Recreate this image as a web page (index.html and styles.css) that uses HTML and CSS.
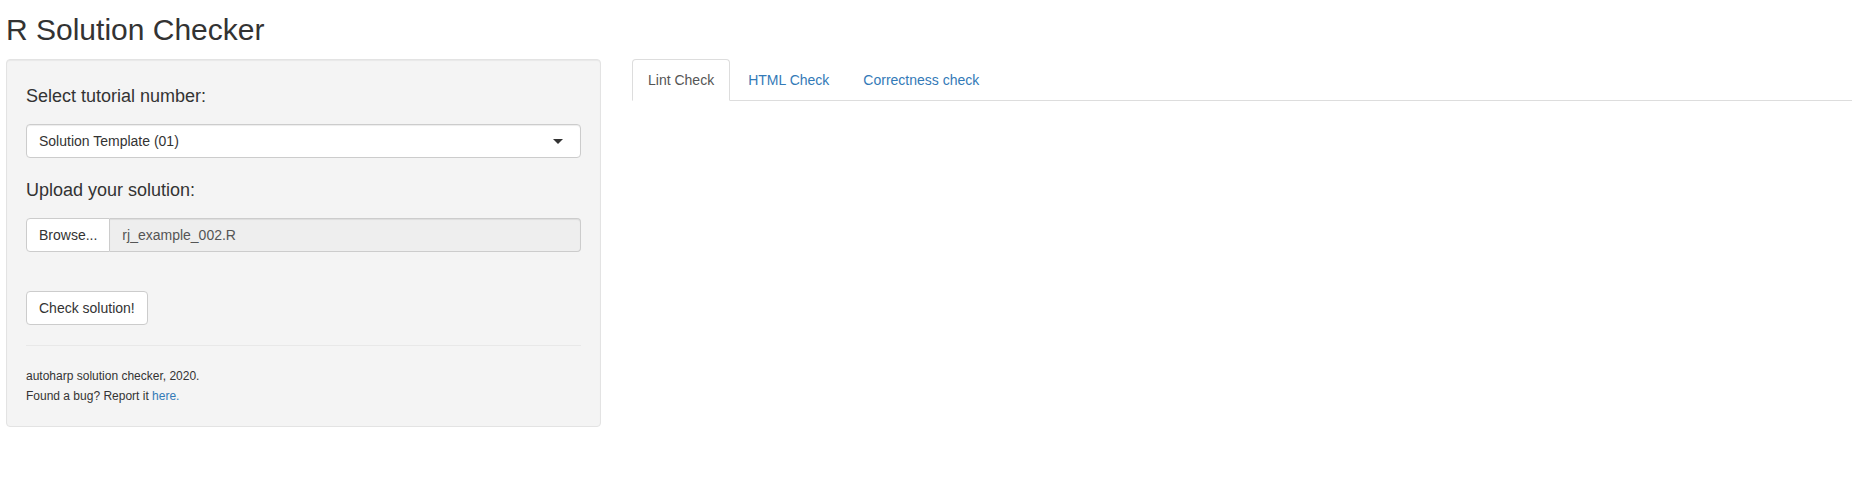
FILE: index.html
```html
<!DOCTYPE html>
<html lang="en">
<head>
<meta charset="utf-8">
<title>R Solution Checker</title>
<link rel="stylesheet" href="styles.css">
</head>
<body>
<div class="page">
  <h2 class="title">R Solution Checker</h2>
  <div class="layout">
    <aside class="sidebar">
      <div class="form-group">
        <label class="field-label">Select tutorial number:</label>
        <div class="select">
          <span class="select-text">Solution Template (01)</span>
          <span class="caret"></span>
        </div>
      </div>
      <div class="form-group file-group">
        <label class="field-label">Upload your solution:</label>
        <div class="file-input">
          <span class="browse">Browse...</span>
          <span class="file-name">rj_example_002.R</span>
        </div>
      </div>
      <button class="btn" type="button">Check solution!</button>
      <hr class="divider">
      <div class="credits">autoharp solution checker, 2020.<br>Found a bug? Report it <a href="#">here.</a></div>
    </aside>
    <main class="main">
      <ul class="tabs">
        <li class="tab active"><a href="#">Lint Check</a></li>
        <li class="tab"><a href="#">HTML Check</a></li>
        <li class="tab"><a href="#">Correctness check</a></li>
      </ul>
    </main>
  </div>
</div>
</body>
</html>
```

FILE: styles.css
```css
* {
  box-sizing: border-box;
}

html, body {
  margin: 0;
  background: #fff;
}

body {
  font-family: "Liberation Sans", Arial, Helvetica, sans-serif;
  font-size: 14px;
  line-height: 20px;
  color: #333;
}

.page {
  padding: 0 4px 0 6px;
}

.title {
  margin: 13px 0 13px 0;
  font-size: 30px;
  line-height: 33px;
  font-weight: normal;
  color: #333;
}

.layout {
  display: flex;
  align-items: flex-start;
  gap: 31px;
}

.sidebar {
  display: flex;
  flex-direction: column;
  align-items: stretch;
  width: 595px;
  flex: 0 0 595px;
  background: #f4f4f4;
  border: 1px solid #e3e3e3;
  border-radius: 4px;
  box-shadow: inset 0 1px 1px rgba(0, 0, 0, 0.05);
  padding: 19px 19px 20px 19px;
}

.form-group {
  padding-top: 5px;
  margin-bottom: 15px;
}

.file-group {
  margin-bottom: 39px;
}

.field-label {
  display: block;
  margin: 0 0 16px 0;
  font-size: 18px;
  line-height: 24px;
  font-weight: normal;
  color: #333;
}

.select {
  display: flex;
  align-items: center;
  justify-content: space-between;
  height: 34px;
  padding: 6px 17px 6px 12px;
  background: #fff;
  border: 1px solid #ccc;
  border-radius: 4px;
  box-shadow: inset 0 1px 1px rgba(0, 0, 0, 0.075);
  color: #333;
}

.caret {
  width: 0;
  height: 0;
  border-style: solid;
  border-width: 5px 5px 0 5px;
  border-color: #333 transparent transparent transparent;
  margin-top: 1px;
}

.file-input {
  display: flex;
  height: 34px;
}

.browse {
  display: block;
  padding: 6px 12px;
  background: #fff;
  border: 1px solid #ccc;
  border-radius: 4px 0 0 4px;
  color: #333;
}

.file-name {
  display: block;
  flex: 1;
  padding: 6px 12px;
  background: #eee;
  border: 1px solid #ccc;
  border-left: none;
  border-radius: 0 4px 4px 0;
  box-shadow: inset 0 1px 1px rgba(0, 0, 0, 0.075);
  color: #555;
}

.btn {
  align-self: flex-start;
  display: block;
  height: 34px;
  padding: 6px 12px;
  font-family: inherit;
  font-size: 14px;
  line-height: 20px;
  color: #333;
  background: #fff;
  border: 1px solid #ccc;
  border-radius: 4px;
  cursor: pointer;
}

.divider {
  width: 100%;
  margin: 20px 0 20px 0;
  border: 0;
  border-top: 1px solid #e8e8e8;
  height: 0;
}

.credits {
  font-size: 12px;
  line-height: 20px;
  color: #333;
}

.credits a {
  color: #337ab7;
  text-decoration: none;
}

.main {
  flex: 1;
  min-width: 0;
}

.tabs {
  display: flex;
  margin: 0;
  padding: 0;
  list-style: none;
  border-bottom: 1px solid #ddd;
}

.tab {
  margin-bottom: -1px;
}

.tab a {
  display: block;
  margin-right: 2px;
  padding: 10px 15px;
  line-height: 20px;
  border: 1px solid transparent;
  border-radius: 4px 4px 0 0;
  color: #337ab7;
  text-decoration: none;
}

.tab.active a {
  color: #555;
  background: #fff;
  border-color: #ddd #ddd transparent #ddd;
}
```
